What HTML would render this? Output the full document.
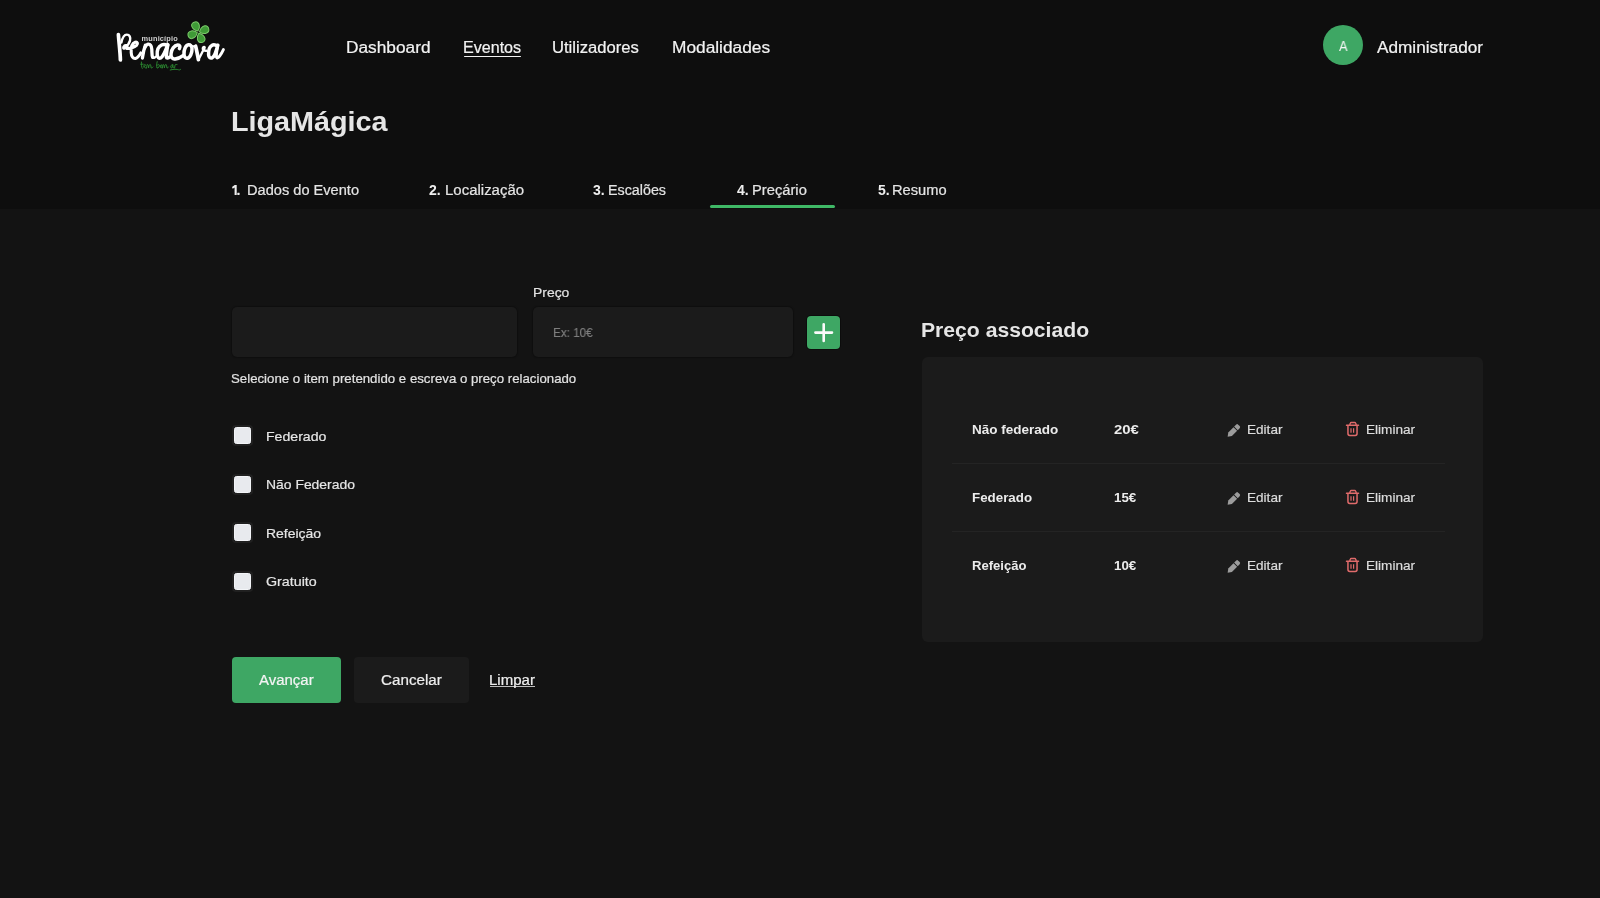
<!DOCTYPE html>
<html><head><meta charset="utf-8">
<style>
*{box-sizing:border-box;margin:0;padding:0}
html,body{width:1600px;height:898px;overflow:hidden}
body{background:#131313;position:relative;font-family:"Liberation Sans",sans-serif;color:#ececec}
.a{position:absolute}
.t{position:absolute;white-space:nowrap;line-height:1;will-change:transform;transform-origin:0 0}
.inp{background:#1b1b1b;border-radius:5px;top:307px;height:50px;box-shadow:0 0 1px 1px #0f0f0f}
.cb{left:232px;width:21px;height:21px;border-radius:4px;background:#202020}
.cb i{position:absolute;left:2px;top:2px;width:17px;height:17px;border-radius:2.5px;background:#e8eaee;border:1px solid #f3f5f8}
.card{left:922px;top:357px;width:561px;height:285px;background:#1b1b1b;border-radius:6px}
.div{left:952px;width:493px;height:1px;background:#242424}
</style></head>
<body>
<div class="a" style="left:0;top:0;width:1600px;height:209px;background:#0e0e0e"></div>
<!-- logo -->
<svg class="a" style="left:0;top:0;will-change:transform" width="240" height="80" viewBox="0 0 240 80">
  <g fill="none" stroke="#ffffff" stroke-linecap="round" stroke-linejoin="round">
    <path d="M118.4 34.6 C119 43 120.2 52 120.4 60" stroke-width="3.7"/>
    <path d="M121.4 42.6 C122.4 37.6 124.4 34.6 126.8 34.6 C129.6 34.6 130.8 37.4 130 40.6 C129.2 43.8 126.6 46.6 124.4 48.4 C123 49.4 122.8 46.8 124.4 45.6 C125.8 44.6 127.2 45.2 127.4 46.6" stroke-width="2.4"/>
    <path d="M126.6 48.4 C129.4 48.6 133.6 47.8 136.6 45.4 C138.4 43.8 137.2 41.6 135.2 42.2 C132.4 43.2 130.8 47.4 131.2 52.6 C131.4 56.6 133 58.8 135.6 58.4 C137.6 58 139.4 55.4 140.8 53" stroke-width="3.1"/>
    <path d="M142.4 58 C143 53.6 144.2 48.4 145.4 45.2" stroke-width="3.3"/>
    <path d="M144.6 48 C145.8 45.6 147 44.2 148.4 44.2 C150.6 44.2 151.6 46.6 151.8 49.4 C152 52.6 151.8 55.6 152.6 57.4" stroke-width="3.3"/>
    <path d="M152.6 57.4 C153.4 58.4 154.6 58 155.6 56.6" stroke-width="2.3"/>
    <path d="M167.6 45.6 C165.6 44.4 163.4 44.2 161.6 45 C158.6 46.4 157 50.6 157.2 54.6 C157.4 57.6 159 58.8 160.8 58 C163.4 56.8 165.6 50.4 167.8 44.8" stroke-width="3.5"/>
    <path d="M167.8 44.8 C167 49.4 166.2 54.4 166.4 57 C166.6 58.6 168.2 58.4 170 56.8" stroke-width="3.5"/>
    <path d="M179.4 48.6 C180.6 46.6 179.8 44.8 177.6 45 C174.4 45.4 171.2 49.4 171 54 C170.8 57.6 172.6 59.2 175 59 C177.6 58.8 180.6 57.4 183 55.6" stroke-width="3.5"/>
    <path d="M188.4 44.8 C185.6 45.2 183.8 50 184 54 C184.2 57.2 185.6 58.6 187.4 58.2 C190.2 57.6 192.2 52.8 192 48.6 C191.8 46 190.4 44.6 188.4 44.8" stroke-width="3.5"/>
    <path d="M189.8 44.8 C191.6 46.4 193.4 46.6 195.4 46" stroke-width="2.3"/>
    <path d="M195.6 46.2 C196.8 50.6 197.6 55.6 198.4 59.6" stroke-width="3.7"/>
    <path d="M198.4 59.6 C200.6 55.4 203 51 204.6 47.8 C205 46.6 203.4 46.6 202.8 48.2 C202.4 49.6 204 51 206.4 50.8" stroke-width="2.4"/>
    <path d="M217.4 46.4 C215.4 44.6 213.4 44.4 211.8 45.4 C209.4 46.8 208.4 51.2 208.6 54.8 C208.8 57.6 210.4 58.6 212.2 57.8 C214.6 56.6 216.4 50.6 217.8 45.2" stroke-width="3.5"/>
    <path d="M217.8 45.2 C217 49.6 216.2 54.4 216.4 56.8 C216.6 58.6 218.2 58.2 219.6 56.2 C221 54.2 222.4 51.8 223.4 49.6" stroke-width="2.9"/>
  </g>
  <text x="141.6" y="41.4" font-family="Liberation Sans" font-weight="700" font-size="7.4" fill="#cfcfcf" letter-spacing="0.15">município</text>
  <g transform="translate(198.4,32.2)">
    <g transform="rotate(-20)"><path d="M1.2 0 C2.8 -2.4 5.6 -4 8.2 -3.8 C10.6 -3.4 11.2 -1 10.8 0.8 C10.4 2.8 8.2 3.8 6.2 3.6 C4 3.3 2.4 1.8 1.2 0Z" fill="#3f9a37" stroke="#7acb69" stroke-width="1"/></g>
    <g transform="rotate(68)"><path d="M1.2 0 C2.8 -2.4 5.6 -4 8.2 -3.8 C10.6 -3.4 11.2 -1 10.8 0.8 C10.4 2.8 8.2 3.8 6.2 3.6 C4 3.3 2.4 1.8 1.2 0Z" fill="#3f9a37" stroke="#7acb69" stroke-width="1"/></g>
    <g transform="rotate(160)"><path d="M1.2 0 C2.8 -2.4 5.6 -4 8.2 -3.8 C10.6 -3.4 11.2 -1 10.8 0.8 C10.4 2.8 8.2 3.8 6.2 3.6 C4 3.3 2.4 1.8 1.2 0Z" fill="#3f9a37" stroke="#7acb69" stroke-width="1"/></g>
    <g transform="rotate(-113)"><path d="M1.2 0 C2.8 -2.4 5.6 -4 8.2 -3.8 C10.6 -3.4 11.2 -1 10.8 0.8 C10.4 2.8 8.2 3.8 6.2 3.6 C4 3.3 2.4 1.8 1.2 0Z" fill="#3f9a37" stroke="#7acb69" stroke-width="1"/></g>
  </g>
  <g fill="none" stroke="#2b8630" stroke-width="1" stroke-linecap="round" stroke-linejoin="round">
    <path d="M141.4 62 C141.6 64.6 141.4 67.4 142.2 68.4 M140.6 64.2 H143.2 M143.6 67 C145.4 66.6 146 64.4 144.8 64.4 C143.6 64.6 143.4 67.8 145.8 68 M146.6 68 C146.8 66 147 64.6 147.4 64.4 C148.4 64.4 148.4 67 148.6 68 C148.8 66 149.4 64.4 150.2 64.4 C151 64.6 150.8 67 151.2 68 C151.6 68.2 152.4 67.6 153 67"/>
    <path d="M157.2 61.6 C156.6 64 156.4 66.4 157 68 C158.4 68.4 159.8 66.4 159.2 64.8 C158.6 64 157.6 64.6 157.2 65.2 M160.6 65.4 C160 66.4 160.4 68.2 161.4 68 C162.4 67.6 162.4 64.6 161.2 64.4 M162.4 68 C162.6 66 162.8 64.6 163.2 64.4 C164.2 64.4 164.2 67 164.4 68 C164.6 66 165.2 64.4 166 64.4 C166.8 64.6 166.6 67 167 68 C167.4 68.2 168 67.6 168.4 67"/>
    <path d="M172.6 64.6 C171 64 170 67.6 171.4 68 C172.4 68.2 172.8 66 172.8 64.6 C172.8 66.4 173 68 173.6 68 M174.6 68 C174.8 66.4 175 64.8 175.4 64.6 C176 64.4 176.6 64.6 177 64.6 M170.2 70 C172.8 69.4 175.6 69 177.8 69.6 C179 69.8 179.6 70.4 180.6 69.4"/>
  </g>
</svg>


<div class="a" style="left:463.5px;top:55.6px;width:57.5px;height:1.8px;background:#f2f2f2;border-radius:1px"></div>
<div class="a" style="left:1323.2px;top:25.3px;width:40px;height:40px;border-radius:50%;background:#3ea764"></div>
<svg class="a" style="left:0;top:0" width="260" height="210"><path d="M232 186.9 L234.7 185 H236.7 V195 H234.6 V187.5 L232.7 188.7 Z" fill="#eeeeee"/><rect x="237.3" y="192.7" width="2.3" height="2.3" rx="0.4" fill="#eeeeee"/></svg>
<div class="a" style="left:710.2px;top:205px;width:124.6px;height:3px;border-radius:2px;background:#3fb866"></div>

<div class="a inp" style="left:232px;width:285px"></div>
<div class="a inp" style="left:533px;width:260px"></div>
<div class="a" style="left:807px;top:315.8px;width:33px;height:33px;border-radius:4px;background:#3ea764;box-shadow:0 0 0 1px #0c0c0c"></div>
<svg class="a" style="left:807px;top:315.8px" width="33" height="33" viewBox="0 0 33 33"><path d="M8.4 16.6h16.6M16.7 8.3v16.6" stroke="#fafafa" stroke-width="2.6" stroke-linecap="round"/></svg>

<div class="a cb" style="top:425px"><i></i></div>
<div class="a cb" style="top:473.5px"><i></i></div>
<div class="a cb" style="top:522px"><i></i></div>
<div class="a cb" style="top:570.5px"><i></i></div>

<div class="a" style="left:232px;top:656.5px;width:109px;height:46px;border-radius:4px;background:#3ea764"></div>
<div class="a" style="left:354px;top:656.5px;width:115px;height:46px;border-radius:4px;background:#1b1b1b"></div>
<div class="a" style="left:489.5px;top:685.5px;width:45.5px;height:1.5px;background:#bdbdbd"></div>

<div class="a card"></div>
<div class="a div" style="top:463px"></div>
<div class="a div" style="top:531px"></div>
<svg class="a" style="left:1222px;top:418px" width="24" height="24" viewBox="0 0 24 24"><g transform="translate(5.4,18.9) rotate(-45)" fill="#9c9c9c"><path d="M0.3 0 L3.8 -2.55 H11.2 V2.55 H3.8 Z"/><path d="M12.1 -2.55 H14.8 Q16.3 -2.55 16.3 -1.05 V1.05 Q16.3 2.55 14.8 2.55 H12.1 Z"/></g></svg>
<svg class="a" style="left:1340px;top:418px" width="24" height="24" viewBox="0 0 24 24" fill="none" stroke="#e06b6b"><path d="M6.5 7.3H18.5" stroke-width="1.5" stroke-linecap="round"/><path d="M9.7 7.2L10.3 5.3Q10.5 4.5 11.3 4.5H14.7Q15.5 4.5 15.7 5.3L16.3 7.2" stroke-width="1.3"/><path d="M7.95 7.5V15.6Q7.95 17.45 9.8 17.45H15.2Q17.05 17.45 17.05 15.6V7.5" stroke-width="1.5"/><path d="M11 10.2V14.8M13.6 10.2V14.8" stroke-width="1.2"/></svg>
<svg class="a" style="left:1222px;top:486px" width="24" height="24" viewBox="0 0 24 24"><g transform="translate(5.4,18.9) rotate(-45)" fill="#9c9c9c"><path d="M0.3 0 L3.8 -2.55 H11.2 V2.55 H3.8 Z"/><path d="M12.1 -2.55 H14.8 Q16.3 -2.55 16.3 -1.05 V1.05 Q16.3 2.55 14.8 2.55 H12.1 Z"/></g></svg>
<svg class="a" style="left:1340px;top:486px" width="24" height="24" viewBox="0 0 24 24" fill="none" stroke="#e06b6b"><path d="M6.5 7.3H18.5" stroke-width="1.5" stroke-linecap="round"/><path d="M9.7 7.2L10.3 5.3Q10.5 4.5 11.3 4.5H14.7Q15.5 4.5 15.7 5.3L16.3 7.2" stroke-width="1.3"/><path d="M7.95 7.5V15.6Q7.95 17.45 9.8 17.45H15.2Q17.05 17.45 17.05 15.6V7.5" stroke-width="1.5"/><path d="M11 10.2V14.8M13.6 10.2V14.8" stroke-width="1.2"/></svg>
<svg class="a" style="left:1222px;top:554px" width="24" height="24" viewBox="0 0 24 24"><g transform="translate(5.4,18.9) rotate(-45)" fill="#9c9c9c"><path d="M0.3 0 L3.8 -2.55 H11.2 V2.55 H3.8 Z"/><path d="M12.1 -2.55 H14.8 Q16.3 -2.55 16.3 -1.05 V1.05 Q16.3 2.55 14.8 2.55 H12.1 Z"/></g></svg>
<svg class="a" style="left:1340px;top:554px" width="24" height="24" viewBox="0 0 24 24" fill="none" stroke="#e06b6b"><path d="M6.5 7.3H18.5" stroke-width="1.5" stroke-linecap="round"/><path d="M9.7 7.2L10.3 5.3Q10.5 4.5 11.3 4.5H14.7Q15.5 4.5 15.7 5.3L16.3 7.2" stroke-width="1.3"/><path d="M7.95 7.5V15.6Q7.95 17.45 9.8 17.45H15.2Q17.05 17.45 17.05 15.6V7.5" stroke-width="1.5"/><path d="M11 10.2V14.8M13.6 10.2V14.8" stroke-width="1.2"/></svg>

<div class="t" style="left:346px;top:39.86px;font-size:16px;color:#f2f2f2;-webkit-text-stroke:0.2px currentColor;transform:scaleX(1.0802);">Dashboard</div>
<div class="t" style="left:463px;top:39.86px;font-size:16px;color:#f2f2f2;-webkit-text-stroke:0.2px currentColor;transform:scaleX(1.0051);">Eventos</div>
<div class="t" style="left:552px;top:39.86px;font-size:16px;color:#f2f2f2;-webkit-text-stroke:0.2px currentColor;transform:scaleX(1.0389);">Utilizadores</div>
<div class="t" style="left:671.5px;top:39.86px;font-size:16px;color:#f2f2f2;-webkit-text-stroke:0.2px currentColor;transform:scaleX(1.0811);">Modalidades</div>
<div class="t" style="left:1338.5px;top:38.75px;font-size:14px;color:#f6f6f6;-webkit-text-stroke:0.2px currentColor;transform:scaleX(0.9200);-webkit-text-stroke:0;">A</div>
<div class="t" style="left:1376.5px;top:39.86px;font-size:16px;color:#f2f2f2;-webkit-text-stroke:0.2px currentColor;transform:scaleX(1.0747);">Administrador</div>
<div class="t" style="left:230.5px;top:107.80px;font-size:28px;color:#e6e6e6;font-weight:700;transform:scaleX(1.0269);">LigaMágica</div>
<div class="t" style="left:246.8px;top:183.15px;font-size:14px;color:#e4e4e4;-webkit-text-stroke:0.2px currentColor;transform:scaleX(1.0430);">Dados do Evento</div>
<div class="t" style="left:429px;top:183.15px;font-size:14px;color:#eeeeee;font-weight:700;">2.</div>
<div class="t" style="left:445px;top:183.15px;font-size:14px;color:#e4e4e4;-webkit-text-stroke:0.2px currentColor;transform:scaleX(1.0697);">Localização</div>
<div class="t" style="left:593px;top:183.15px;font-size:14px;color:#eeeeee;font-weight:700;">3.</div>
<div class="t" style="left:608px;top:183.15px;font-size:14px;color:#e4e4e4;-webkit-text-stroke:0.2px currentColor;transform:scaleX(1.0214);">Escalões</div>
<div class="t" style="left:737px;top:183.15px;font-size:14px;color:#eeeeee;font-weight:700;">4.</div>
<div class="t" style="left:751.8px;top:183.15px;font-size:14px;color:#e4e4e4;-webkit-text-stroke:0.2px currentColor;transform:scaleX(1.0517);">Preçário</div>
<div class="t" style="left:877.5px;top:183.15px;font-size:14px;color:#eeeeee;font-weight:700;">5.</div>
<div class="t" style="left:892px;top:183.15px;font-size:14px;color:#e4e4e4;-webkit-text-stroke:0.2px currentColor;transform:scaleX(1.0478);">Resumo</div>
<div class="t" style="left:533px;top:285.50px;font-size:13px;color:#e2e2e2;-webkit-text-stroke:0.2px currentColor;transform:scaleX(1.0694);">Preço</div>
<div class="t" style="left:553px;top:326.00px;font-size:13px;color:#7e7e7e;-webkit-text-stroke:0.2px currentColor;transform:scaleX(0.9007);">Ex: 10€</div>
<div class="t" style="left:231px;top:371.50px;font-size:13px;color:#e2e2e2;-webkit-text-stroke:0.2px currentColor;transform:scaleX(1.0186);">Selecione o item pretendido e escreva o preço relacionado</div>
<div class="t" style="left:265.5px;top:429.50px;font-size:13px;color:#e6e6e6;-webkit-text-stroke:0.2px currentColor;transform:scaleX(1.0842);">Federado</div>
<div class="t" style="left:265.5px;top:478.00px;font-size:13px;color:#e6e6e6;-webkit-text-stroke:0.2px currentColor;transform:scaleX(1.0699);">Não Federado</div>
<div class="t" style="left:265.5px;top:526.50px;font-size:13px;color:#e6e6e6;-webkit-text-stroke:0.2px currentColor;transform:scaleX(1.0743);">Refeição</div>
<div class="t" style="left:266px;top:575.00px;font-size:13px;color:#e6e6e6;-webkit-text-stroke:0.2px currentColor;transform:scaleX(1.0975);">Gratuito</div>
<div class="t" style="left:258.5px;top:672.95px;font-size:14px;color:#f4f4f4;-webkit-text-stroke:0.2px currentColor;transform:scaleX(1.0691);">Avançar</div>
<div class="t" style="left:380.5px;top:672.95px;font-size:14px;color:#eeeeee;-webkit-text-stroke:0.2px currentColor;transform:scaleX(1.0858);">Cancelar</div>
<div class="t" style="left:489px;top:672.95px;font-size:14px;color:#eeeeee;-webkit-text-stroke:0.2px currentColor;transform:scaleX(1.0740);">Limpar</div>
<div class="t" style="left:921px;top:320.07px;font-size:20px;color:#e6e6e6;font-weight:700;transform:scaleX(1.0574);">Preço associado</div>
<div class="t" style="left:972px;top:423.00px;font-size:13px;color:#ececec;font-weight:700;transform:scaleX(1.0381);">Não federado</div>
<div class="t" style="left:1113.5px;top:423.00px;font-size:13px;color:#ececec;font-weight:700;transform:scaleX(1.1463);">20€</div>
<div class="t" style="left:1247px;top:423.00px;font-size:13px;color:#dcdcdc;-webkit-text-stroke:0.2px currentColor;transform:scaleX(1.0437);">Editar</div>
<div class="t" style="left:1365.5px;top:423.00px;font-size:13px;color:#dcdcdc;-webkit-text-stroke:0.2px currentColor;transform:scaleX(1.0467);">Eliminar</div>
<div class="t" style="left:972px;top:491.00px;font-size:13px;color:#ececec;font-weight:700;transform:scaleX(1.0261);">Federado</div>
<div class="t" style="left:1113.5px;top:491.00px;font-size:13px;color:#ececec;font-weight:700;transform:scaleX(1.0252);">15€</div>
<div class="t" style="left:1247px;top:491.00px;font-size:13px;color:#dcdcdc;-webkit-text-stroke:0.2px currentColor;transform:scaleX(1.0437);">Editar</div>
<div class="t" style="left:1365.5px;top:491.00px;font-size:13px;color:#dcdcdc;-webkit-text-stroke:0.2px currentColor;transform:scaleX(1.0467);">Eliminar</div>
<div class="t" style="left:972px;top:559.00px;font-size:13px;color:#ececec;font-weight:700;transform:scaleX(1.0065);">Refeição</div>
<div class="t" style="left:1113.5px;top:559.00px;font-size:13px;color:#ececec;font-weight:700;transform:scaleX(1.0252);">10€</div>
<div class="t" style="left:1247px;top:559.00px;font-size:13px;color:#dcdcdc;-webkit-text-stroke:0.2px currentColor;transform:scaleX(1.0437);">Editar</div>
<div class="t" style="left:1365.5px;top:559.00px;font-size:13px;color:#dcdcdc;-webkit-text-stroke:0.2px currentColor;transform:scaleX(1.0467);">Eliminar</div>
</body></html>
